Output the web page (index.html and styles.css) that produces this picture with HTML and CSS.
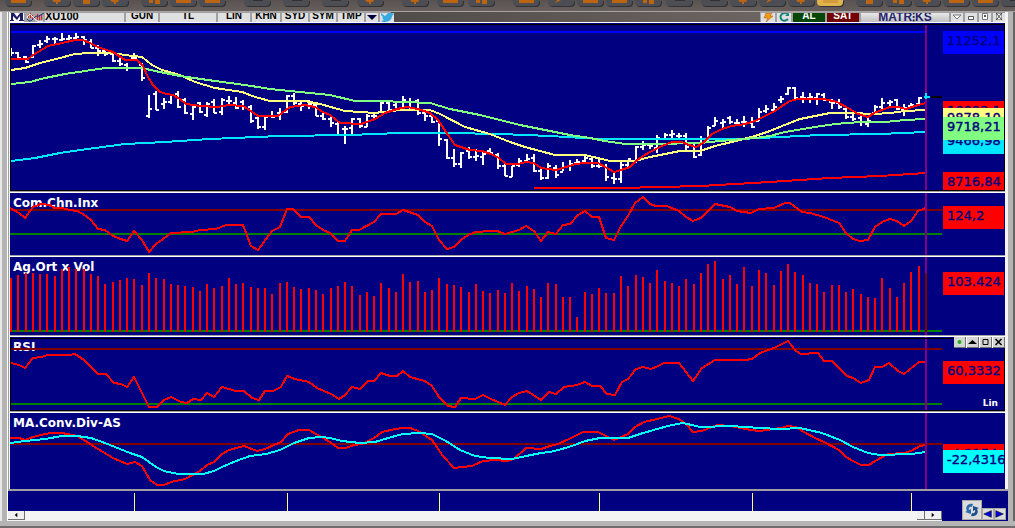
FILE: index.html
```html
<!DOCTYPE html>
<html lang="tr">
<head>
<meta charset="utf-8">
<title>XU100</title>
<link rel="stylesheet" href="styles.css">
</head>
<body>
<nav class="toolbar" id="toolbar" aria-label="Araçlar"></nav>
<main class="window">
  <header class="titlebar">
    <svg class="logo" viewBox="0 0 14 9" aria-hidden="true"><path d="M1 0h3l3 4 3-4h3v7h1v1H9V7h1V3L7 7 3 3v4h1v1H0V7h1z" fill="#1c1c66"/></svg>
    <svg class="wave" viewBox="0 0 19 9" aria-hidden="true"><rect width="19" height="9" fill="#a4a4a4"/><path d="M2.500 1v4M4.500 0v5M6.500 2v4M11.500 1v6M13.500 2v5M15.500 1v6" stroke="#e02020" fill="none"/><path d="M1 6q3 4 6 0t6-3l5-3" stroke="#203080" fill="none"/><path d="M1 5q2-6 5-2t5 5 6 0" stroke="#fff" fill="none"/></svg>
    <button class="cell symbol">XU100</button>
    <button class="cell w-gun">GUN</button>
    <button class="cell w-tl">TL</button>
    <button class="cell w-lin">LIN</button>
    <button class="cell w-khn">KHN</button>
    <button class="cell w-syd">SYD</button>
    <button class="cell w-syd">SYM</button>
    <button class="cell w-syd">TMP</button>
    <button class="cell icon" aria-label="Menü"><svg viewBox="0 0 12 9"><path d="M1 2h10L6 7z" fill="#000040"/></svg></button>
    <button class="cell bird" aria-label="Twitter"><svg viewBox="0 0 14 9"><path d="M1 0l4 3 3-3h4l2 1-2 2c0 3-3 6-7 6-2 0-3 0-4-1l3-1-2-2 1-1-2-2z" fill="#36a9e1"/></svg></button>
    <span class="spacer"></span>
    <button class="cell bird" aria-label="Hızlı"><svg viewBox="0 0 14 9"><path d="M5 0h6L9 3h3L5 9l2-4H3z" fill="#f39a12" stroke="#9a5a00" stroke-width=".5"/></svg></button>
    <button class="cell bird" aria-label="Yenile"><svg viewBox="0 0 14 9"><path d="M11 1Q8-1 5 1 2 4 5 7q3 2 6-1" fill="none" stroke="#12867a" stroke-width="2"/><path d="M8 3h4V0z" fill="#12867a"/></svg></button>
    <button class="cell buy">AL</button>
    <button class="cell sell">SAT</button>
    <span class="cell brand">MATR⁝KS</span>
    <button class="cell icon" aria-label="Aşağı"><svg viewBox="0 0 12 9"><path d="M2 2h8L6 6z" fill="#fff" stroke="#777"/></svg></button>
    <button class="cell icon" aria-label="Küçült"><svg viewBox="0 0 12 9"><path d="M3.500 3.500h5v3h-5z" fill="#fff" stroke="#555"/></svg></button>
    <button class="cell icon" aria-label="Büyüt"><svg viewBox="0 0 12 9"><path d="M3.500.5h5v6h-5z" fill="#fff" stroke="#777"/><path d="M5 2h2v2H5z" fill="#555"/></svg></button>
    <button class="cell icon" aria-label="Kapat"><svg viewBox="0 0 12 9"><path d="M3.500.5h5v6h-5z" fill="#fff" stroke="#999"/><path d="M3 0l6 7M9 0L3 7" stroke="#444"/></svg></button>
  </header>

  <section class="panels">
    <article class="panel price">
      <svg class="chart" viewBox="10 23 995 168" preserveAspectRatio="none">
        <path class="ohlc" id="ohlc"/>
        <path class="line blue" d="M11 32H926"/>
        <polyline class="line cyan" points="11,161 35,158 60,153 80,150 125,144 165,142 210,139 280,136 350,135 400,133 450,133 500,134 550,136 600,139 740,139 780,137 820,135 880,134 926,132"/>
        <polyline class="line yellow" points="11,70 25,68 40,63 60,58 75,54 90,53 112,53 125,55 142,57 152,65 162,70 180,75 195,82 215,88 242,92 255,97 270,101 305,101 320,104 345,111 375,113 400,110 430,110 440,114 465,127 490,134 510,142 525,147 555,155 585,155 610,161 635,161 650,157 680,151 700,151 715,146 740,140 755,136 770,131 782,126 800,119 830,113 850,113 875,114 890,113 905,111 926,110"/>
        <polyline class="line green" points="11,84 30,82 45,78 65,74 85,71 105,68 142,68 155,71 180,76 215,81 245,85 270,89 310,93 330,95 355,101 380,101 430,103 450,109 480,115 500,120 520,125 550,131 570,135 590,138 605,141 625,144 655,144 700,143 720,141 755,138 770,136 785,132 815,127 835,124 860,122 885,122 905,120 926,119"/>
        <polyline class="line red" points="11,59 28,59 33,55 48,46 62,43 75,40 83,40 90,43 100,48 113,52 125,60 137,60 143,66 148,77 153,85 160,92 167,94 173,95 180,99 186,104 200,106 217,107 229,105 243,106 251,111 258,116 278,116 290,107 305,105 315,107 323,112 330,115 340,123 361,124 375,119 385,113 397,109 407,107 418,109 430,113 438,120 448,135 455,145 470,150 482,151 491,154 499,158 506,164 518,164 526,162 534,163 541,168 556,170 566,167 576,164 585,163 598,163 607,168 614,172 621,170 630,167 636,161 643,156 650,152 662,146 672,142 682,142 689,145 696,147 703,143 712,134 722,129 732,126 745,124 755,121 765,116 775,111 782,106 790,101 798,99 824,99 837,102 848,108 858,114 868,117 874,113 890,107 898,107 906,109 918,105 926,103"/>
        <polyline class="line red" points="534,188 620,188 700,186 770,182 830,178 880,176 926,173"/>
        <path class="line cursor" d="M926 25V190"/>
        <path class="line cyan" d="M926 93v6M924 97h6"/>
        <path class="line black" d="M931 97h11"/>
      </svg>
      <output class="tag tag-blue">11252,1</output>
      <output class="tag tag-red short">10093,1</output>
      <output class="tag tag-cyan">9466,98</output>
      <output class="tag tag-yellow">9878,10</output>
      <output class="tag tag-green">9718,21</output>
      <output class="tag tag-red low">8716,84</output>
    </article>

    <article class="panel cci">
      <h2 class="label">Com.Chn.Inx</h2>
      <svg class="chart" viewBox="10 193 995 62" preserveAspectRatio="none">
        <path class="line maroon" d="M10 210H942"/>
        <path class="line level" d="M10 234H942"/>
        <polyline class="line red" points="10,208 19,213 25,218 33,207 41,204 50,205 54,208 62,208 70,210 77,211 83,214 91,220 98,229 105,230 113,236 121,239 127,241 134,231 142,240 149,252 156,244 163,239 171,233 192,232 200,230 216,229 226,225 243,225 251,246 258,250 272,231 280,227 287,209 293,209 301,217 309,217 316,225 323,230 330,233 338,241 345,241 352,230 359,230 374,222 381,214 396,214 403,210 418,215 425,222 432,226 439,240 447,249 454,247 461,240 468,235 476,232 490,231 497,231 505,234 519,230 526,226 534,231 541,241 548,232 556,234 563,225 570,224 578,215 585,211 592,217 599,217 606,238 614,240 621,226 628,216 635,203 643,197 650,204 656,206 667,206 679,211 686,217 693,221 701,218 708,211 715,204 730,207 737,211 751,213 759,209 774,208 785,203 790,203 802,212 810,213 824,217 839,223 846,233 853,239 860,241 868,240 875,227 882,222 890,219 897,221 904,226 911,221 918,211 926,208"/>
        <path class="line cursor" d="M926 193V255"/>
      </svg>
      <output class="tag tag-red">124,2</output>
    </article>

    <article class="panel volume">
      <h2 class="label">Ag.Ort x Vol</h2>
      <svg class="chart" viewBox="10 257 995 78" preserveAspectRatio="none">
        <path class="line level" d="M10 331H942"/>
        <path class="line cursor" d="M926 257V335"/>
        <path class="line red" id="volume"/>
        <path class="line maroon" d="M926 273V332"/>
      </svg>
      <output class="tag tag-red">103.424</output>
    </article>

    <article class="panel rsi">
      <h2 class="label">RSI</h2>
      <svg class="chart" viewBox="10 337 995 74" preserveAspectRatio="none">
        <path class="line maroon" d="M10 349H942"/>
        <path class="line level" d="M10 404H942"/>
        <polyline class="line red" points="11,363 19,365 25,368 33,358 41,357 48,355 69,355 75,354 84,360 98,374 106,374 114,383 121,384 127,387 134,377 149,407 157,407 164,400 171,397 181,402 187,403 193,399 201,400 207,393 214,397 222,387 236,391 244,391 252,398 259,400 265,391 273,391 281,387 287,376 295,379 309,382 317,388 331,394 339,399 345,395 352,387 360,389 368,381 374,381 381,373 390,376 397,376 403,371 410,377 425,381 432,386 439,397 448,406 455,407 461,398 475,399 483,395 491,399 505,405 512,397 519,393 527,391 541,400 549,392 556,394 564,387 577,385 585,382 592,386 600,386 607,394 615,395 622,382 628,379 636,369 643,367 651,369 658,366 664,363 679,363 693,381 702,368 715,360 745,360 752,359 760,353 774,348 788,341 796,351 801,354 818,353 824,361 832,361 847,376 853,378 861,383 869,380 875,367 882,367 889,363 898,371 904,374 919,362 926,362"/>
        <path class="line cursor" d="M926 337V411"/>
      </svg>
      <output class="tag tag-red">60,3332</output>
      <span class="scale">Lin</span>
      <div class="tools">
        <button aria-label="Ekle"><svg viewBox="0 0 11 10"><circle cx="5.500" cy="5" r="3" fill="#bfe8bf"/><circle cx="5.500" cy="5" r="2" fill="#2fa52f"/></svg></button>
        <button aria-label="Yukarı"><svg viewBox="0 0 11 10"><path d="M1 7l4.500-4L10 7z"/></svg></button>
        <button aria-label="Büyüt"><svg viewBox="0 0 11 10"><path d="M3 2.500h5v5H3z" fill="none" stroke="#000"/></svg></button>
        <button aria-label="Kapat"><svg viewBox="0 0 11 10"><path d="M2.500 2l6 6M8.500 2l-6 6" stroke="#000" stroke-width="1.500"/></svg></button>
      </div>
    </article>

    <article class="panel macd">
      <h2 class="label">MA.Conv.Div-AS</h2>
      <svg class="chart" viewBox="10 413 995 76" preserveAspectRatio="none">
        <path class="line maroon" d="M10 444H942"/>
        <polyline class="line red" points="10,438 19,438 25,440 33,437 41,435 50,433 62,433 77,436 84,440 98,449 113,458 127,464 135,462 142,466 150,480 157,485 164,485 171,482 185,479 200,471 207,465 214,462 222,454 229,450 244,446 257,451 265,449 281,442 288,434 299,430 309,430 316,434 330,442 338,448 346,448 354,445 362,444 374,438 382,432 395,429 403,428 410,428 418,431 432,440 443,456 454,468 472,466 483,461 495,460 507,461 514,459 526,448 541,449 550,446 558,444 569,439 583,432 598,432 606,436 614,440 628,434 635,427 644,422 657,419 669,416 679,419 686,424 693,432 702,431 717,425 731,426 745,429 759,431 781,428 788,426 796,427 804,432 815,438 824,442 839,450 846,457 853,461 861,465 869,465 875,461 888,454 904,453 911,451 920,446 926,445"/>
        <polyline class="line aqua" points="10,443 25,441 45,439 62,436 77,436 91,438 105,443 120,449 130,453 142,457 149,462 156,467 164,471 178,474 203,474 214,471 222,467 236,461 250,456 266,454 280,450 294,443 309,438 321,437 330,438 342,441 360,443 375,442 388,438 403,434 420,433 432,434 446,441 460,450 475,456 490,458 512,459 526,456 541,453 550,452 562,449 572,446 585,441 600,438 628,438 640,434 657,429 672,425 683,423 700,427 730,426 760,428 780,429 800,428 822,433 840,440 853,447 868,453 880,455 911,454 926,452"/>
        <path class="line cursor" d="M926 413V489"/>
      </svg>
      <output class="tag tag-red">-4,2154</output>
      <output class="tag tag-aqua">-22,4316</output>
    </article>
  </section>

  <footer class="footer">
    <svg class="axis" viewBox="8 491 1000 20" preserveAspectRatio="none" aria-hidden="true"><path d="M134.500 493v18M287.500 493v18M439.500 493v18M599.500 493v18M752.500 493v18M911.500 493v18" stroke="#ffff80"/></svg>
    <div class="scrollbar">
      <button class="arrow" aria-label="Sola kaydır"><svg viewBox="0 0 17 9"><path d="M7 4.500L10 2v5z"/></svg></button>
      <div class="track"><button class="thumb" aria-label="Konum"></button></div>
      <button class="arrow" aria-label="Sağa kaydır"><svg viewBox="0 0 17 9"><path d="M10 4.500L7 2v5z"/></svg></button>
    </div>
    <div class="paging">
      <button class="refresh" aria-label="Yenile"><svg viewBox="0 0 18 18"><path d="M10 3C4 2 2 7 4 10l-2 1 6 2V8L6 9C5 7 7 5 9 6z" fill="#2c6cac"/><path d="M8 15c6 1 8-4 6-7l2-1-6-2v5l2-1c1 2-1 4-3 3z" fill="#1c508c"/></svg></button>
      <button class="page" aria-label="Önceki"><svg viewBox="0 0 12 10"><path d="M1 5l9-4v8z" fill="#0000e0" stroke="#000" stroke-width=".7"/></svg></button>
      <button class="page" aria-label="Sonraki"><svg viewBox="0 0 12 10"><path d="M10 5L1 1v8z" fill="#0000e0" stroke="#000" stroke-width=".7"/></svg></button>
    </div>
  </footer>
</main>
<script src="chart.js"></script>
</body>
</html>
```
FILE: chart.js
```js
// Bars are evenly spaced across the plot; rows are high, low, open, close.
const STEP = 7.262;
const barX = i => 11 + Math.round(i * STEP);

const prices = `48,55,51,52 52,58,52,57 56,62,56,61 45,57,56,45 40,47,44,43 36,42,40,38 37,44,38,38 33,40,39,38 35,41,38,37 33,39,37,36
36,44,36,39 39,47,41,47 45,55,47,50 50,55,50,53 52,61,53,60 57,65,60,63 63,70,64,67 53,58,57,57 63,80,64,77 95,117,115,108
91,109,93,109 98,108,103,101 94,103,101,94 91,107,93,106 98,113,99,112 106,119,113,106 102,112,102,111 102,116,114,103 99,112,101,112 98,114,111,99
96,104,100,100 97,108,102,107 100,109,101,106 105,122,106,120 115,128,117,126 116,129,126,116 111,117,115,116 108,119,112,112 95,112,111,95 93,104,95,102
101,110,103,105 100,108,104,103 103,115,104,115 112,119,115,118 116,126,118,122 122,135,123,134 126,143,128,128 118,134,127,118 118,127,118,125 114,126,126,115
114,118,115,115 102,112,111,102 102,109,102,109 103,110,104,108 96,107,107,99 98,110,101,109 99,114,100,112 111,120,112,115 114,122,115,121 122,145,120,138
139,158,139,157 149,166,157,163 152,167,163,152 147,158,150,156 149,160,156,155 150,164,156,153 148,154,150,152 153,168,154,165 162,175,165,175 166,176,176,165
158,166,164,160 154,162,160,158 154,171,157,170 168,179,170,177 163,178,177,165 165,177,167,174 162,170,171,166 160,170,165,163 159,163,162,161 155,163,160,157
157,167,158,165 158,167,165,165 164,180,165,176 171,183,177,178 161,182,178,164 160,168,164,158 146,162,160,146 141,149,146,144 143,148,144,145 135,152,147,137
133,139,138,134 130,137,134,133 133,139,135,135 133,149,135,146 142,157,145,156 136,155,154,138 126,141,140,127 117,125,125,120 119,127,122,121 116,123,117,121
119,124,122,122 116,126,121,121 117,127,122,126 108,120,120,111 105,112,110,108 103,111,109,106 96,102,99,98 87,94,93,87 87,98,87,97 92,102,96,97
93,102,97,96 93,104,97,93 93,100,94,99 99,108,101,102 99,108,102,106 107,118,108,116 113,120,116,118 115,125,117,121 118,126,123,120 105,113,112,106
98,108,106,102 100,105,102,101 99,109,99,108 104,115,108,107 103,107,105,104 97,104,103,97`;

const volumes = [278,275,273,273,274,274,276,269,267,269,269,274,276,284,282,280,278,279,285,273,278,279,284,285,286,287,291,284,288,286,
278,284,283,287,288,288,294,283,282,287,289,288,290,294,288,286,282,286,295,292,296,283,288,292,274,282,281,292,290,278,
284,285,287,292,284,291,293,290,293,283,291,286,289,297,283,284,297,297,317,292,294,288,293,293,276,286,275,277,283,270,
281,283,286,279,284,273,264,261,279,275,284,267,286,270,273,285,271,264,272,275,283,284,292,285,285,292,289,294,297,298,
278,288,297,283,272,266];

document.getElementById('ohlc').setAttribute('d', prices.split(/\s+/).map((row, i) => {
  const [high, low, open, close] = row.split(',').map(Number);
  const x = barX(i);
  return `M${x} ${high}V${low + 1}M${x - 3} ${open + 1}h3M${x} ${close + 1}h3`;
}).join(''));

document.getElementById('volume').setAttribute('d',
  volumes.map((top, i) => `M${barX(i)} ${top}V332`).join(''));

// Toolbar: name, space before the button, icon outline.
const shapes = {
  tray: 'M6 0h15v3H6z',
  gear: 'M8 0h9l-1 2h-2v2h-2V2h-2z',
  stem: 'M10 0h7v4h-7z',
  pair: 'M8 0h4v3H8zM14 0h5v4h-5z',
  pen: 'M7 3l2-3h4l-4 2z',
  dash: 'M9 0h10v1H9z'
};
const tools = [['tray',''],['gear','lg'],['stem',''],['gear',''],['pair','lg'],['tray',''],['tray',''],['dash','xl'],['dash','lg'],['dash','lg'],
['gear','md'],['gear','xl'],['tray','md'],['pair','sm'],['tray','xl'],['pen','md'],['tray',''],['tray',''],['pair',''],['dash','sm'],
['dash','md'],['gear',''],['pen',''],['gear',''],['tray','active'],['stem','lg'],['pair',''],['gear',''],['tray',''],['tray',''],['dash','']];
document.getElementById('toolbar').innerHTML = tools.map(([shape, kind], i) =>
  `<button class="tool ${kind}" aria-label="Araç ${i + 1}"><svg viewBox="0 0 26 6"><path class="${shape === 'dash' ? 'muted' : 'glyph'}" d="${shapes[shape]}"/></svg></button>`).join('');
```
FILE: styles.css
```css
:root {
  --navy: #000080;
  --face: #e0e0e0;
  --frame: #b4b4b4;
}
* { box-sizing: border-box; }
body {
  margin: 0;
  height: 100vh;
  min-height: 500px;
  display: flex;
  flex-direction: column;
  overflow: hidden;
  background: var(--frame);
  font-family: "DejaVu Sans", sans-serif;
}
button { margin: 0; padding: 0; border: 0; font: inherit; flex: none; }
svg { display: block; }

.toolbar {
  flex: none;
  height: 12px;
  padding-left: 5px;
  display: flex;
  gap: 3px;
  overflow: hidden;
  background: linear-gradient(#5a5250, #665f5c);
  border-bottom: 1px solid #a8a4a4;
}
.tool {
  width: 26px;
  height: 6px;
  background: #4c4e54;
  border-radius: 0 0 4px 4px;
  box-shadow: 1px 1px 0 #303238;
}
.tool svg { width: 26px; height: 6px; }
.glyph { fill: #bc6410; }
.muted { fill: #303030; }
.sm { margin-left: 2px; }
.md { margin-left: 6px; }
.lg { margin-left: 10px; }
.xl { margin-left: 16px; }
.active { background: #dfb44c; }
.active .glyph { fill: #d49a3c; }

.window {
  flex: 1;
  min-height: 0;
  display: flex;
  flex-direction: column;
  padding: 0 7px 5px 8px;
  background: linear-gradient(90deg, #e8e8e8 0 2px, var(--frame) 2px 7px, #fff 7px 8px, #a0a0a0 8px 9px, transparent 9px calc(100% - 7px), var(--frame) calc(100% - 7px) calc(100% - 2px), #686464 calc(100% - 2px)), #f4f4f4;
  border-bottom: 2px solid #706c6c;
  box-shadow: inset 0 -5px var(--frame);
}
.titlebar {
  flex: none;
  height: 10px;
  margin: 0 3px 0 2px;
  padding-top: 1px;
  display: flex;
  gap: 2px;
  overflow: hidden;
  background: linear-gradient(90deg, #a0a0a0 0 381px, #504c4a 381px, #6c6460 750px, #a0a0a0 750px);
}
.logo { width: 14px; height: 9px; background: #fff; }
.wave { width: 19px; height: 9px; }
.cell {
  height: 9px;
  display: flex;
  align-items: flex-start;
  justify-content: center;
  overflow: hidden;
  background: var(--face);
  color: #000;
  font: bold 10px/6px "Liberation Sans", sans-serif;
}
.symbol { width: 79px; justify-content: flex-start; font-size: 11px; margin-left: -2px; }
.w-gun { width: 32px; }
.w-tl { width: 56px; }
.w-lin { width: 32px; }
.w-khn { width: 28px; }
.w-syd { width: 26px; }
.icon { width: 12px; }
.icon svg { width: 12px; height: 9px; }
.bird { width: 14px; }
.bird svg { width: 14px; height: 9px; }
.spacer { flex: 1; }
.buy { width: 32px; background: #064606; color: #fff; }
.sell { width: 32px; background: #700404; color: #fff; }
.brand { width: 88px; color: #24246c; font-size: 12px; line-height: 8px; background: linear-gradient(#e8e8e8, #c0c0c0); }

.panels {
  flex: 1;
  min-height: 0;
  margin: 0 3px 0 2px;
  display: grid;
  grid-template-rows: 169fr 64fr 80fr 76fr 78fr;
}
.panel {
  position: relative;
  min-height: 0;
  overflow: hidden;
  border-top: 2px solid transparent;
  background:
    linear-gradient(var(--navy), var(--navy)) padding-box,
    linear-gradient(#a0a0a0 1px, #fff 1px) border-box;
}
.price {
  border-top: 1px solid #fff;
}
.price, .rsi { outline: 1px solid #000; outline-offset: -1px; }
.price { outline-offset: -2px; }
.rsi { outline-offset: -3px; }
.price, .rsi { outline: none; }
.price::after, .rsi::after {
  content: "";
  position: absolute;
  inset: 1px 0 0 0;
  border: 1px solid #000;
  pointer-events: none;
}
.chart {
  position: relative;
  width: 100%;
  height: 100%;
  shape-rendering: crispEdges;
}
.line, .ohlc { fill: none; stroke-width: 2; }
.ohlc { stroke: #fff; }
.red { stroke: #f00; }
.blue { stroke: #00f; }
.cyan { stroke: #00e8ff; }
.aqua { stroke: #0ff; }
.yellow { stroke: #ffff80; }
.green { stroke: #80ff80; }
.maroon { stroke: #800000; }
.level { stroke: #008000; }
.cursor { stroke: #800080; }
.black { stroke: #000; }

.label {
  position: absolute;
  top: 3px;
  left: 3px;
  margin: 0;
  color: #fff;
  font-size: 12px;
  line-height: 14px;
}
.tag {
  position: absolute;
  right: 1px;
  width: 61px;
  height: 23px;
  padding-left: 4px;
  overflow: hidden;
  color: var(--navy);
  font-size: 13px;
  line-height: 19px;
  white-space: nowrap;
  -webkit-text-stroke: 0.4px var(--navy);
}
.tag-red { background: #f00; }
.tag-blue { top: 8px; background: #00f; }
.tag-cyan { top: 108px; background: #00e8ff; }
.tag-yellow { top: 85px; background: #ffff80; }
.tag-green { top: 94px; background: #80ff80; }
.short { top: 78px; }
.low { top: 149px; height: 18px; }
.cci .tag { top: 13px; }
.volume .tag { top: 15px; }
.rsi .tag { top: 24px; }
.macd .tag-red { top: 31px; }
.macd .tag-aqua { top: 37px; background: #0ff; }
.scale {
  position: absolute;
  right: 7px;
  bottom: 2px;
  color: #fff;
  font-size: 9px;
  font-weight: bold;
  line-height: 12px;
}
.tools {
  position: absolute;
  z-index: 1;
  top: -1px;
  right: 0;
  display: flex;
  gap: 1px;
  background: #fff;
}
.tools button {
  width: 12px;
  height: 12px;
  background: #d4d4d4;
  border-right: 1px solid #707070;
  border-bottom: 1px solid #707070;
}
.tools svg { width: 11px; height: 10px; }

.footer { position: relative; flex: none; background: var(--navy); }
.axis {
  width: 100%;
  height: 22px;
  border-top: 2px solid #fff;
  border-image: linear-gradient(#a0a0a0 50%, #fff 50%) 2 0 0 0;
  shape-rendering: crispEdges;
}
.scrollbar { display: flex; height: 10px; margin-right: 66px; background: #f4f4f4; }
.track { flex: 1; display: flex; justify-content: flex-end; }
.arrow, .thumb {
  height: 9px;
  background: #f0f0f0;
  border-right: 1px solid #707070;
  border-bottom: 1px solid #707070;
}
.arrow { width: 17px; }
.arrow svg { width: 16px; height: 8px; }
.thumb { width: 8px; }
.paging { position: absolute; right: 2px; bottom: 1px; display: flex; align-items: flex-end; }
.refresh { width: 20px; height: 20px; background: #dcdcdc; border: 1px solid #a8a8a8; }
.refresh svg { width: 18px; height: 18px; }
.page { width: 12px; height: 12px; background: #dcdcdc; border: 1px solid #a8a8a8; }
.page svg { width: 10px; height: 10px; }
```
